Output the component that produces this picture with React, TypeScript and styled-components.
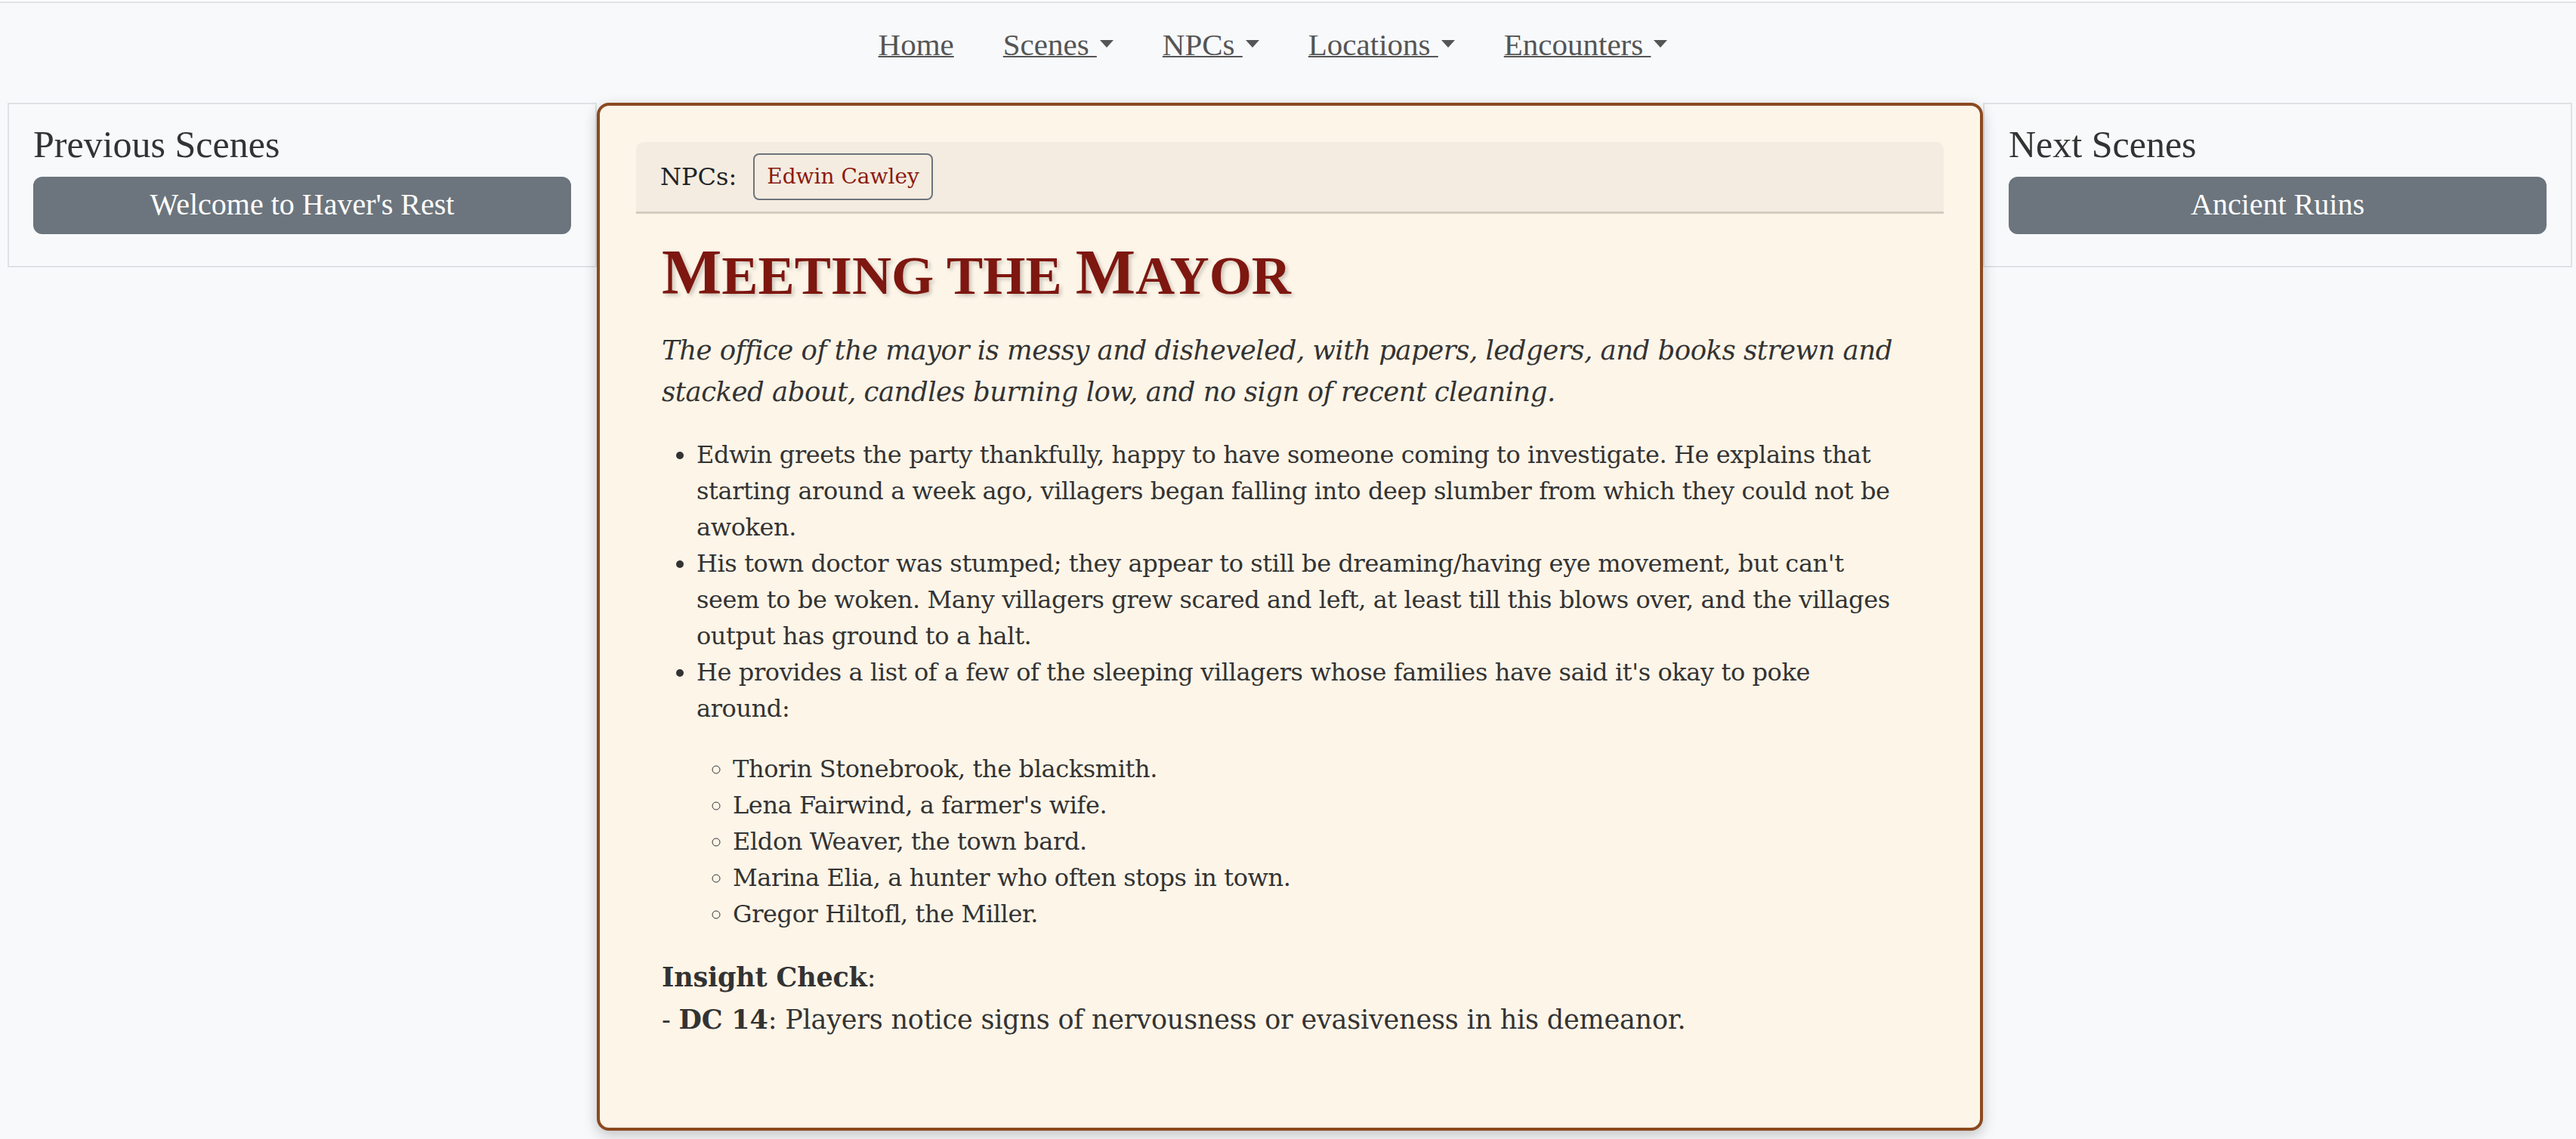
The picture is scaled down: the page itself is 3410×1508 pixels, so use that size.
import React from "react";
import styled, { createGlobalStyle } from "styled-components";

const GlobalStyle = createGlobalStyle`
  html, body {
    margin: 0;
    padding: 0;
    background: #ffffff;
  }
  body {
    font-family: "Liberation Serif", "Times New Roman", serif;
  }
  *, *::before, *::after {
    box-sizing: border-box;
  }
`;

const Page = styled.div`
  margin-top: 2px;
  min-height: 1506px;
  background: #f8f9fa;
  border-top: 2px solid #e2e3e5;
`;

const NavBar = styled.nav`
  height: 132px;
  display: flex;
  justify-content: center;
  align-items: flex-start;
  gap: 65px;
  padding: 25px 40px 0 0;
`;

const NavLink = styled.a`
  font-family: "Liberation Serif", "Times New Roman", serif;
  font-size: 41px;
  line-height: 61px;
  color: #555555;
  text-decoration: underline;
  text-decoration-thickness: 2px;
  white-space: pre;
  cursor: pointer;
`;

const Caret = styled.span`
  display: inline-block;
  margin-left: 4px;
  vertical-align: 10px;
  width: 0;
  height: 0;
  border-top: 10px solid #555555;
  border-left: 9px solid transparent;
  border-right: 9px solid transparent;
`;

const Row = styled.div`
  display: flex;
  align-items: flex-start;
  padding: 0 5px 12px 10px;
`;

const SideBox = styled.aside`
  flex: none;
  width: 780px;
  border: 2px solid #dee2e6;
  background: #f8f9fa;
  padding: 23px 32px 42px;
`;

const SideHeading = styled.h2`
  margin: 0 0 13px;
  font-family: "Liberation Serif", "Times New Roman", serif;
  font-size: 50px;
  font-weight: 400;
  line-height: 1.2;
  color: #333333;
`;

const SceneButton = styled.button`
  display: block;
  width: 100%;
  background: #6c757d;
  border: 2px solid #6c757d;
  border-radius: 12px;
  color: #ffffff;
  font-family: "Liberation Serif", "Times New Roman", serif;
  font-size: 40px;
  line-height: 48px;
  padding: 11px 24px 13px;
  text-align: center;
  cursor: pointer;
`;

const Card = styled.main`
  position: relative;
  z-index: 1;
  flex: 1;
  min-width: 0;
  background: #fdf5e8;
  border: 4px solid #8b4a1f;
  border-radius: 16px;
  padding: 48px;
  box-shadow: 0 6px 18px rgba(0, 0, 0, 0.22);
  font-family: "DejaVu Serif", serif;
  color: #333333;
`;

const NpcBar = styled.div`
  display: flex;
  align-items: center;
  gap: 22px;
  padding: 15px 32px;
  background: #f4ece0;
  border-bottom: 3px solid #d5ccbf;
  border-radius: 10px 10px 0 0;
`;

const NpcLabel = styled.span`
  font-size: 32px;
  line-height: 48px;
  color: #212529;
`;

const NpcButton = styled.button`
  background: transparent;
  border: 2px solid #6c757d;
  border-radius: 8px;
  padding: 8px 16px;
  font-family: "DejaVu Serif", serif;
  font-size: 28px;
  line-height: 42px;
  color: #8b1a10;
  cursor: pointer;
`;

const Content = styled.div`
  padding: 0 62px 35px 34px;
`;

const Title = styled.h1`
  margin: 28px 0 24px;
  font-family: "Liberation Serif", "Times New Roman", serif;
  font-size: 84px;
  font-weight: 700;
  line-height: 1.2;
  color: #7d1710;
  text-shadow: 3px 3px 5px rgba(0, 0, 0, 0.2);
`;

const SmallCaps = styled.span`
  font-size: 0.86em;
  text-transform: uppercase;
`;

const Lead = styled.p`
  margin: 0 0 32px;
  font-size: 35.5px;
  font-style: italic;
  line-height: 55px;
  letter-spacing: -0.5px;
`;

const BulletList = styled.ul`
  margin: 0 0 32px;
  padding-left: 46px;
  font-size: 32px;
  line-height: 48px;
  letter-spacing: -0.4px;
  list-style: disc;
`;

const SubList = styled.ul`
  margin: 32px 0 0;
  padding-left: 48px;
  list-style: circle;
`;

const Check = styled.p`
  margin: 0 0 32px;
  font-size: 35px;
  line-height: 56px;
  letter-spacing: -0.2px;
`;

const navItems: { label: string; caret: boolean }[] = [
  { label: "Home", caret: false },
  { label: "Scenes ", caret: true },
  { label: "NPCs ", caret: true },
  { label: "Locations ", caret: true },
  { label: "Encounters ", caret: true },
];

const villagers = [
  "Thorin Stonebrook, the blacksmith.",
  "Lena Fairwind, a farmer's wife.",
  "Eldon Weaver, the town bard.",
  "Marina Elia, a hunter who often stops in town.",
  "Gregor Hiltofl, the Miller.",
];

export default function App() {
  return (
    <>
      <GlobalStyle />
      <Page>
        <NavBar>
          {navItems.map((item) => (
            <NavLink key={item.label}>
              {item.label}
              {item.caret && <Caret />}
            </NavLink>
          ))}
        </NavBar>
        <Row>
          <SideBox>
            <SideHeading>Previous Scenes</SideHeading>
            <SceneButton>Welcome to Haver's Rest</SceneButton>
          </SideBox>
          <Card>
            <NpcBar>
              <NpcLabel>NPCs:</NpcLabel>
              <NpcButton>Edwin Cawley</NpcButton>
            </NpcBar>
            <Content>
              <Title>
                M<SmallCaps>eeting the </SmallCaps>M<SmallCaps>ayor</SmallCaps>
              </Title>
              <Lead>
                The office of the mayor is messy and disheveled, with papers, ledgers, and books
                strewn and stacked about, candles burning low, and no sign of recent cleaning.
              </Lead>
              <BulletList>
                <li>
                  Edwin greets the party thankfully, happy to have someone coming to investigate. He
                  explains that starting around a week ago, villagers began falling into deep
                  slumber from which they could not be awoken.
                </li>
                <li>
                  His town doctor was stumped; they appear to still be dreaming/having eye movement,
                  but can't seem to be woken. Many villagers grew scared and left, at least till this
                  blows over, and the villages output has ground to a halt.
                </li>
                <li>
                  He provides a list of a few of the sleeping villagers whose families have said
                  it's okay to poke around:
                  <SubList>
                    {villagers.map((v) => (
                      <li key={v}>{v}</li>
                    ))}
                  </SubList>
                </li>
              </BulletList>
              <Check>
                <strong>Insight Check</strong>:
                <br />- <strong>DC 14</strong>: Players notice signs of nervousness or evasiveness in
                his demeanor.
              </Check>
            </Content>
          </Card>
          <SideBox>
            <SideHeading>Next Scenes</SideHeading>
            <SceneButton>Ancient Ruins</SceneButton>
          </SideBox>
        </Row>
      </Page>
    </>
  );
}
